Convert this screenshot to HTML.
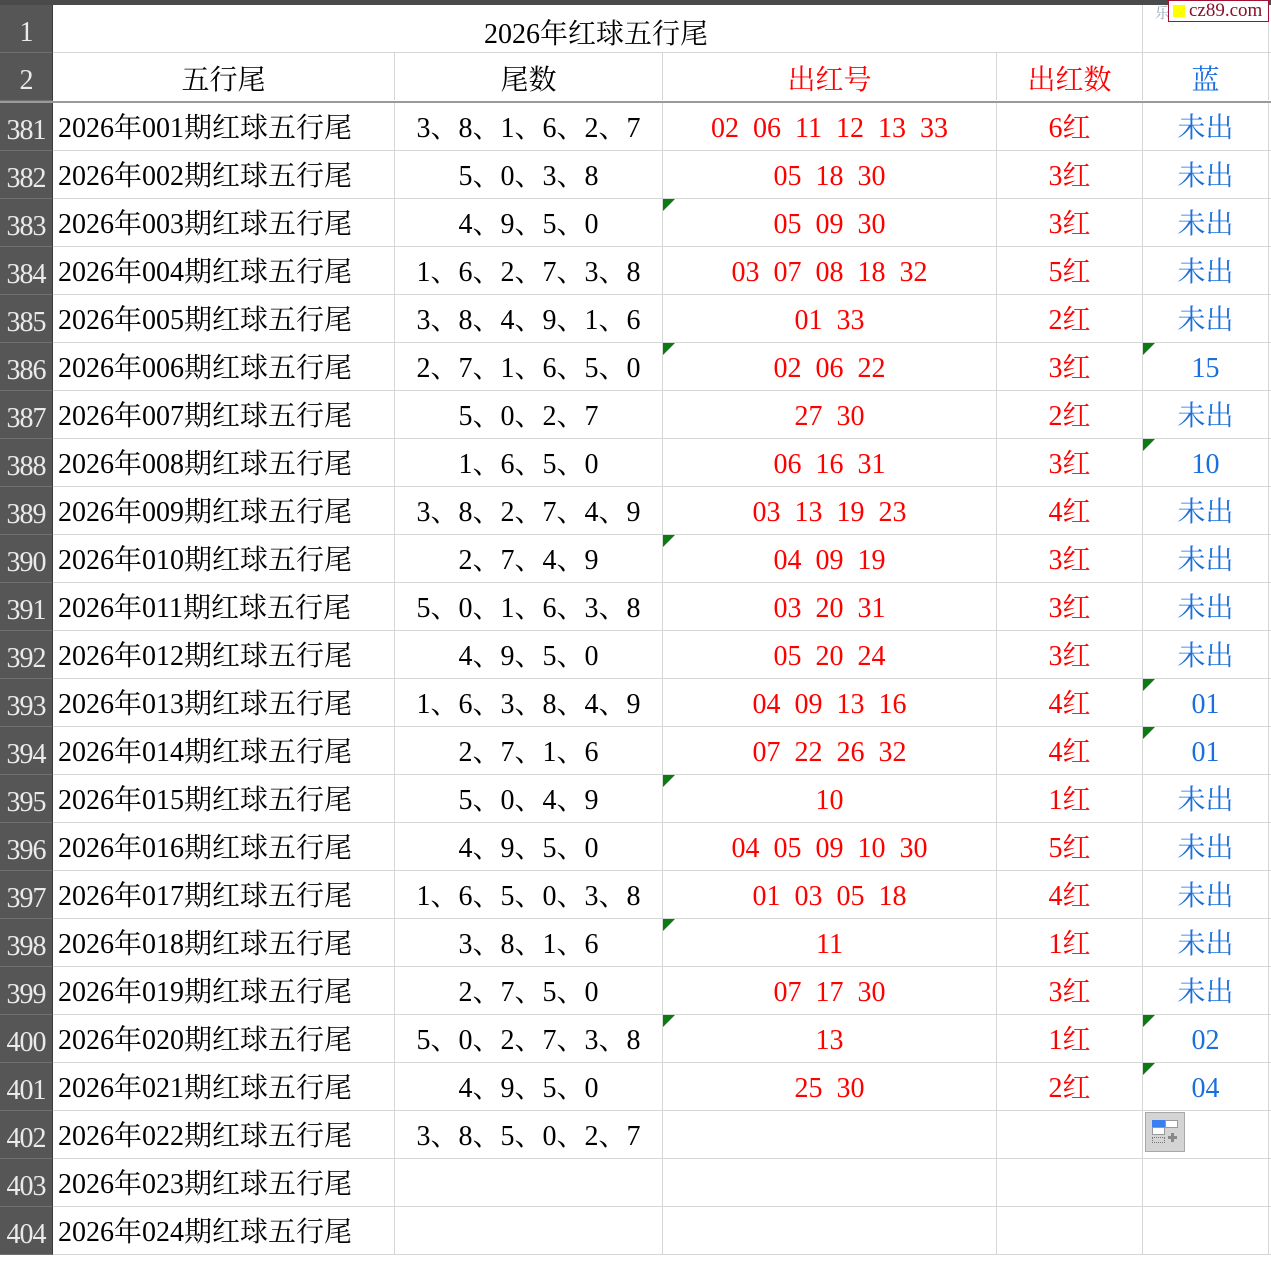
<!DOCTYPE html>
<html><head><meta charset="utf-8"><style>
*{margin:0;padding:0;box-sizing:border-box}
body{width:1271px;height:1247px;overflow:hidden;background:#fff;position:relative;font-family:"Liberation Serif","Noto Serif CJK SC",serif;}
.top{position:absolute;left:0;top:0;width:1271px;height:5px;background:#4a4a4a}
.r{position:absolute;left:0;width:1271px;height:48px;display:flex;border-bottom:1px solid #d6d6d6}
.r>div{height:47px;border-right:1px solid #d6d6d6;font-size:28px;line-height:47px;padding-top:2px;text-align:center;white-space:pre;position:relative}
.h{width:53px;background:#565656;color:#eaeaea;font-size:28px!important;border-right:1px solid #3a3a3a!important;border-bottom:1px solid #707070;height:48px!important;line-height:52px!important;letter-spacing:-1px}
.a{width:342px;text-align:left!important;padding-left:5px}
.b{width:268px}.c{width:334px;color:#f00}.d{width:146px;color:#f00}.e{width:126px;color:#1a6ede}
.t::before{content:"";position:absolute;left:0;top:0;border-top:12px solid #0a7a12;border-right:12px solid transparent}
</style></head><body>
<div class="top"></div>
<div class="r" style="top:5px"><div class="h">1</div><div style="width:1090px"></div><div class="e"></div></div>
<div style="position:absolute;left:484px;top:12px;font-size:28px;">2026年红球五行尾</div>
<div class="r" style="top:53px;border-bottom:2px solid #9a9a9a;height:50px"><div class="h">2</div><div class="a" style="text-align:center!important;padding-left:0;padding-top:4px">五行尾</div><div class="b" style="padding-top:4px">尾数</div><div class="c" style="padding-top:4px">出红号</div><div class="d" style="padding-top:4px">出红数</div><div class="e" style="padding-top:4px">蓝</div></div>

<div class="r" style="top:103px"><div class="h">381</div><div class="a">2026年001期红球五行尾</div><div class="b">3、8、1、6、2、7</div><div class="c">02  06  11  12  13  33</div><div class="d">6红</div><div class="e">未出</div></div>
<div class="r" style="top:151px"><div class="h">382</div><div class="a">2026年002期红球五行尾</div><div class="b">5、0、3、8</div><div class="c">05  18  30</div><div class="d">3红</div><div class="e">未出</div></div>
<div class="r" style="top:199px"><div class="h">383</div><div class="a">2026年003期红球五行尾</div><div class="b">4、9、5、0</div><div class="c t">05  09  30</div><div class="d">3红</div><div class="e">未出</div></div>
<div class="r" style="top:247px"><div class="h">384</div><div class="a">2026年004期红球五行尾</div><div class="b">1、6、2、7、3、8</div><div class="c">03  07  08  18  32</div><div class="d">5红</div><div class="e">未出</div></div>
<div class="r" style="top:295px"><div class="h">385</div><div class="a">2026年005期红球五行尾</div><div class="b">3、8、4、9、1、6</div><div class="c">01  33</div><div class="d">2红</div><div class="e">未出</div></div>
<div class="r" style="top:343px"><div class="h">386</div><div class="a">2026年006期红球五行尾</div><div class="b">2、7、1、6、5、0</div><div class="c t">02  06  22</div><div class="d">3红</div><div class="e t">15</div></div>
<div class="r" style="top:391px"><div class="h">387</div><div class="a">2026年007期红球五行尾</div><div class="b">5、0、2、7</div><div class="c">27  30</div><div class="d">2红</div><div class="e">未出</div></div>
<div class="r" style="top:439px"><div class="h">388</div><div class="a">2026年008期红球五行尾</div><div class="b">1、6、5、0</div><div class="c">06  16  31</div><div class="d">3红</div><div class="e t">10</div></div>
<div class="r" style="top:487px"><div class="h">389</div><div class="a">2026年009期红球五行尾</div><div class="b">3、8、2、7、4、9</div><div class="c">03  13  19  23</div><div class="d">4红</div><div class="e">未出</div></div>
<div class="r" style="top:535px"><div class="h">390</div><div class="a">2026年010期红球五行尾</div><div class="b">2、7、4、9</div><div class="c t">04  09  19</div><div class="d">3红</div><div class="e">未出</div></div>
<div class="r" style="top:583px"><div class="h">391</div><div class="a">2026年011期红球五行尾</div><div class="b">5、0、1、6、3、8</div><div class="c">03  20  31</div><div class="d">3红</div><div class="e">未出</div></div>
<div class="r" style="top:631px"><div class="h">392</div><div class="a">2026年012期红球五行尾</div><div class="b">4、9、5、0</div><div class="c">05  20  24</div><div class="d">3红</div><div class="e">未出</div></div>
<div class="r" style="top:679px"><div class="h">393</div><div class="a">2026年013期红球五行尾</div><div class="b">1、6、3、8、4、9</div><div class="c">04  09  13  16</div><div class="d">4红</div><div class="e t">01</div></div>
<div class="r" style="top:727px"><div class="h">394</div><div class="a">2026年014期红球五行尾</div><div class="b">2、7、1、6</div><div class="c">07  22  26  32</div><div class="d">4红</div><div class="e t">01</div></div>
<div class="r" style="top:775px"><div class="h">395</div><div class="a">2026年015期红球五行尾</div><div class="b">5、0、4、9</div><div class="c t">10</div><div class="d">1红</div><div class="e">未出</div></div>
<div class="r" style="top:823px"><div class="h">396</div><div class="a">2026年016期红球五行尾</div><div class="b">4、9、5、0</div><div class="c">04  05  09  10  30</div><div class="d">5红</div><div class="e">未出</div></div>
<div class="r" style="top:871px"><div class="h">397</div><div class="a">2026年017期红球五行尾</div><div class="b">1、6、5、0、3、8</div><div class="c">01  03  05  18</div><div class="d">4红</div><div class="e">未出</div></div>
<div class="r" style="top:919px"><div class="h">398</div><div class="a">2026年018期红球五行尾</div><div class="b">3、8、1、6</div><div class="c t">11</div><div class="d">1红</div><div class="e">未出</div></div>
<div class="r" style="top:967px"><div class="h">399</div><div class="a">2026年019期红球五行尾</div><div class="b">2、7、5、0</div><div class="c">07  17  30</div><div class="d">3红</div><div class="e">未出</div></div>
<div class="r" style="top:1015px"><div class="h">400</div><div class="a">2026年020期红球五行尾</div><div class="b">5、0、2、7、3、8</div><div class="c t">13</div><div class="d">1红</div><div class="e t">02</div></div>
<div class="r" style="top:1063px"><div class="h">401</div><div class="a">2026年021期红球五行尾</div><div class="b">4、9、5、0</div><div class="c">25  30</div><div class="d">2红</div><div class="e t">04</div></div>
<div class="r" style="top:1111px"><div class="h">402</div><div class="a">2026年022期红球五行尾</div><div class="b">3、8、5、0、2、7</div><div class="c"></div><div class="d"></div><div class="e"></div></div>
<div class="r" style="top:1159px"><div class="h">403</div><div class="a">2026年023期红球五行尾</div><div class="b"></div><div class="c"></div><div class="d"></div><div class="e"></div></div>
<div class="r" style="top:1207px"><div class="h">404</div><div class="a">2026年024期红球五行尾</div><div class="b"></div><div class="c"></div><div class="d"></div><div class="e"></div></div>

<div style="position:absolute;left:1145px;top:1112px;width:40px;height:40px;background:#d4d4d4;border:1px solid #a8a8a8">
<div style="position:absolute;left:6px;top:7px;width:13px;height:7px;background:#3a7ef0"></div>
<div style="position:absolute;left:19px;top:7px;width:13px;height:8px;background:#fff;border:1px solid #999"></div>
<div style="position:absolute;left:6px;top:14px;width:13px;height:8px;background:#fff;border:1px solid #999"></div>
<div style="position:absolute;left:6px;top:24px;width:13px;height:6px;border:1px dotted #777"></div>
<div style="position:absolute;left:25px;top:20px;width:3px;height:9px;background:#888"></div>
<div style="position:absolute;left:22px;top:23px;width:9px;height:3px;background:#888"></div>
</div>
<div style="position:absolute;left:1155px;top:2px;font-size:15px;color:#9ab">乐</div>
<div style="position:absolute;left:1168px;top:0;width:101px;height:22px;background:#fff;border:1px solid #a01030;font-size:19px;line-height:20px;color:#8a1028;padding-left:20px">cz89.com<div style="position:absolute;left:4px;top:4px;width:12px;height:12px;background:#ff0"></div></div>
</body></html>
